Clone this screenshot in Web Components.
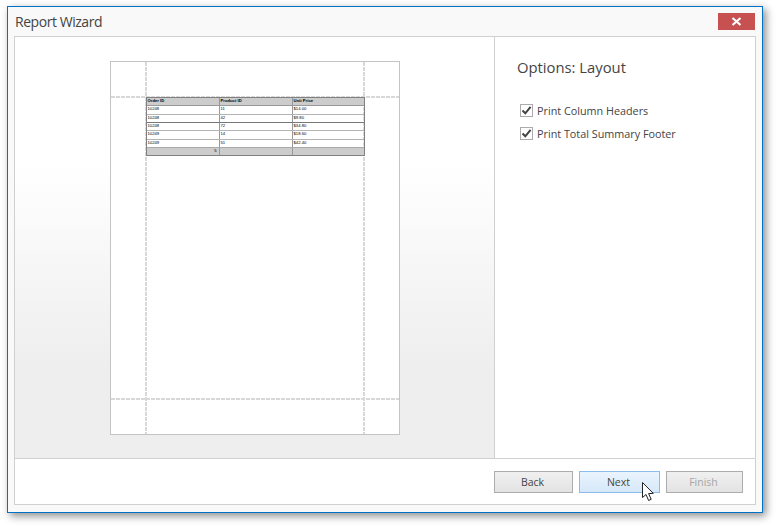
<!DOCTYPE html>
<html>
<head>
<meta charset="utf-8">
<title>Report Wizard</title>
<style>
  html, body { margin: 0; background: #fff; }
  body { width: 776px; height: 527px; overflow: hidden; font-family: "Open Sans", "Noto Sans", sans-serif; }
</style>
</head>
<body>
<wizard-window heading="Report Wizard">
  <report-preview slot="preview"></report-preview>
  <options-panel slot="options" heading="Options: Layout">
    <wizard-check>Print Column Headers</wizard-check>
    <wizard-check>Print Total Summary Footer</wizard-check>
  </options-panel>
  <wizard-button slot="footer">Back</wizard-button>
  <wizard-button slot="footer" state="hover">Next<mouse-cursor></mouse-cursor></wizard-button>
  <wizard-button slot="footer" state="disabled">Finish</wizard-button>
</wizard-window>

<script>
class WizardWindow extends HTMLElement {
  constructor() {
    super();
    this.attachShadow({ mode: "open" }).innerHTML = `
      <style>
        :host {
          display: flex;
          flex-direction: column;
          box-sizing: border-box;
          width: 756px;
          height: 507px;
          margin: 6px 0 0 7px;
          border: 1px solid #0072c6;
          background: #f9f9f9;
          box-shadow: 3px 3px 8px rgba(0, 0, 0, 0.45);
          color: #444;
        }
        .bar {
          display: flex;
          justify-content: space-between;
          height: 29px;
          padding: 6px 7px 0 7px;
          box-sizing: border-box;
        }
        .title { font-size: 14px; line-height: 17px; letter-spacing: -0.45px; color: #444; }
        .close {
          display: flex;
          align-items: center;
          justify-content: center;
          width: 37px;
          height: 17px;
          background: #c75050;
        }
        .body {
          flex: 1;
          display: flex;
          flex-direction: column;
          margin: 0 6px 7px 6px;
          border: 1px solid #d0d0d0;
          background: #fff;
          min-height: 0;
        }
        .main { flex: 1; display: flex; min-height: 0; }
        .left {
          width: 480px;
          display: flex;
          justify-content: center;
          padding-top: 24px;
          box-sizing: border-box;
          border-right: 1px solid #d0d0d0;
          background: linear-gradient(#fff 0, #fff 130px, #eee 330px);
        }
        .right { flex: 1; }
        .foot {
          display: flex;
          justify-content: flex-end;
          gap: 6px;
          height: 46px;
          padding: 12px 12px 0 0;
          box-sizing: border-box;
          border-top: 1px solid #d0d0d0;
        }
      </style>
      <div class="bar">
        <span class="title"></span>
        <span class="close">
          <svg width="11" height="9" viewBox="0 0 11 9"><path d="M1.5 1 L9.5 8 M9.5 1 L1.5 8" stroke="#fff" stroke-width="2.2" fill="none"/></svg>
        </span>
      </div>
      <div class="body">
        <div class="main">
          <div class="left"><slot name="preview"></slot></div>
          <div class="right"><slot name="options"></slot></div>
        </div>
        <div class="foot"><slot name="footer"></slot></div>
      </div>`;
    this.shadowRoot.querySelector(".title").textContent = this.getAttribute("heading");
  }
}

class ReportPreview extends HTMLElement {
  constructor() {
    super();
    const rows = [
      ["10248", "11", "$14.00"],
      ["10248", "42", "$9.80"],
      ["10248", "72", "$34.80"],
      ["10249", "14", "$18.60"],
      ["10249", "51", "$42.40"]
    ];
    const rowHtml = rows.map(r => `<div class="row">${r.map(c => `<span>${c}</span>`).join("")}</div>`).join("");
    this.attachShadow({ mode: "open" }).innerHTML = `
      <style>
        :host {
          display: block;
          position: relative;
          box-sizing: border-box;
          width: 290px;
          height: 374px;
          padding: 35px 34px 0 35px;
          border: 1px solid #c4c4c4;
          background: #fff;
        }
        .guide { position: absolute; }
        .h {
          left: 0; right: 0; height: 2px;
          background: repeating-linear-gradient(90deg, #d8d8d8 0 4px, transparent 4px 5px);
        }
        .v {
          top: 0; bottom: 0; width: 2px;
          background: repeating-linear-gradient(180deg, #d8d8d8 0 4px, transparent 4px 5px);
        }
        .table {
          position: relative;
          border: 1px solid #808080;
          font: 4.2px/6.5px "Liberation Sans", sans-serif;
          color: #000;
        }
        .row {
          display: grid;
          grid-template-columns: 72px 73px 1fr;
          height: 7.33px;
          border-top: 1px solid #b4b4b4;
        }
        .row span { padding-left: 1px; border-left: 1px solid #999; overflow: hidden; white-space: nowrap; }
        .row span:first-child { border-left: 0; }
        .row.head { border-top: 0; background: #ccc; font-weight: bold; }
        .row.first { border-top-color: #999; }
        .row.dark { border-top-color: #777; }
        .row.foot { background: #ccc; border-top-color: #aaa; }
        .row.foot span:first-child { text-align: right; padding-right: 2px; }
      </style>
      <div class="guide h" style="top:34px"></div>
      <div class="guide h" style="top:336px"></div>
      <div class="guide v" style="left:34px"></div>
      <div class="guide v" style="left:252px"></div>
      <div class="table">
        <div class="row head"><span>Order ID</span><span>Product ID</span><span>Unit Price</span></div>
        ${rowHtml}
        <div class="row foot"><span>5</span><span></span><span></span></div>
      </div>`;
    const trs = this.shadowRoot.querySelectorAll(".row");
    trs[1].classList.add("first");
    trs[3].classList.add("dark");
  }
}

class OptionsPanel extends HTMLElement {
  constructor() {
    super();
    this.attachShadow({ mode: "open" }).innerHTML = `
      <style>
        :host { display: block; padding: 19px 22px; }
        h2 { margin: 0 0 26px 0; font-size: 14.8px; line-height: 22px; font-weight: 400; color: #444; }
        .list { display: flex; flex-direction: column; gap: 10px; padding-left: 3px; }
      </style>
      <h2></h2>
      <div class="list"><slot></slot></div>`;
    this.shadowRoot.querySelector("h2").textContent = this.getAttribute("heading");
  }
}

class WizardCheck extends HTMLElement {
  constructor() {
    super();
    this.attachShadow({ mode: "open" }).innerHTML = `
      <style>
        :host { display: flex; align-items: center; gap: 4px; height: 13px; font-size: 10.8px; color: #444; }
        .box { width: 11px; height: 11px; border: 1px solid #ababab; background: #fff; display: flex; flex: none; }
      </style>
      <span class="box">
        <svg width="11" height="11" viewBox="0 0 11 11"><path d="M1.5 5.5 L4.3 8.3 L9.6 1.8" stroke="#444" stroke-width="2" fill="none"/></svg>
      </span>
      <span><slot></slot></span>`;
  }
}

class WizardButton extends HTMLElement {
  constructor() {
    super();
    this.attachShadow({ mode: "open" }).innerHTML = `
      <style>
        :host {
          display: flex;
          align-items: center;
          justify-content: center;
          position: relative;
          box-sizing: border-box;
          width: 79px;
          height: 22px;
          padding-right: 2px;
          border: 1px solid #acacac;
          background: linear-gradient(#f0f0f0, #e3e3e3);
          font-size: 10.5px;
          color: #444;
        }
        :host([state="hover"]) {
          width: 81px;
          border-color: #8cbcea;
          background: linear-gradient(#eaf4fd, #d6e8fa);
        }
        :host([state="disabled"]) { width: 77px; color: #a6a6a6; }
      </style>
      <slot></slot>`;
  }
}

class MouseCursor extends HTMLElement {
  constructor() {
    super();
    this.attachShadow({ mode: "open" }).innerHTML = `
      <style>
        :host { position: absolute; left: 61px; top: 10px; width: 14px; height: 20px; display: block; }
      </style>
      <svg width="14" height="20" viewBox="0 0 14 20"><path d="M1.5 0.5 V15.5 L5 12.5 L7.6 18.5 L10.2 17.3 L7.6 11.6 L12.3 11.4 Z" fill="#fff" stroke="#222" stroke-width="1"/></svg>`;
  }
}

customElements.define("wizard-window", WizardWindow);
customElements.define("report-preview", ReportPreview);
customElements.define("options-panel", OptionsPanel);
customElements.define("wizard-check", WizardCheck);
customElements.define("wizard-button", WizardButton);
customElements.define("mouse-cursor", MouseCursor);
</script>
</body>
</html>
